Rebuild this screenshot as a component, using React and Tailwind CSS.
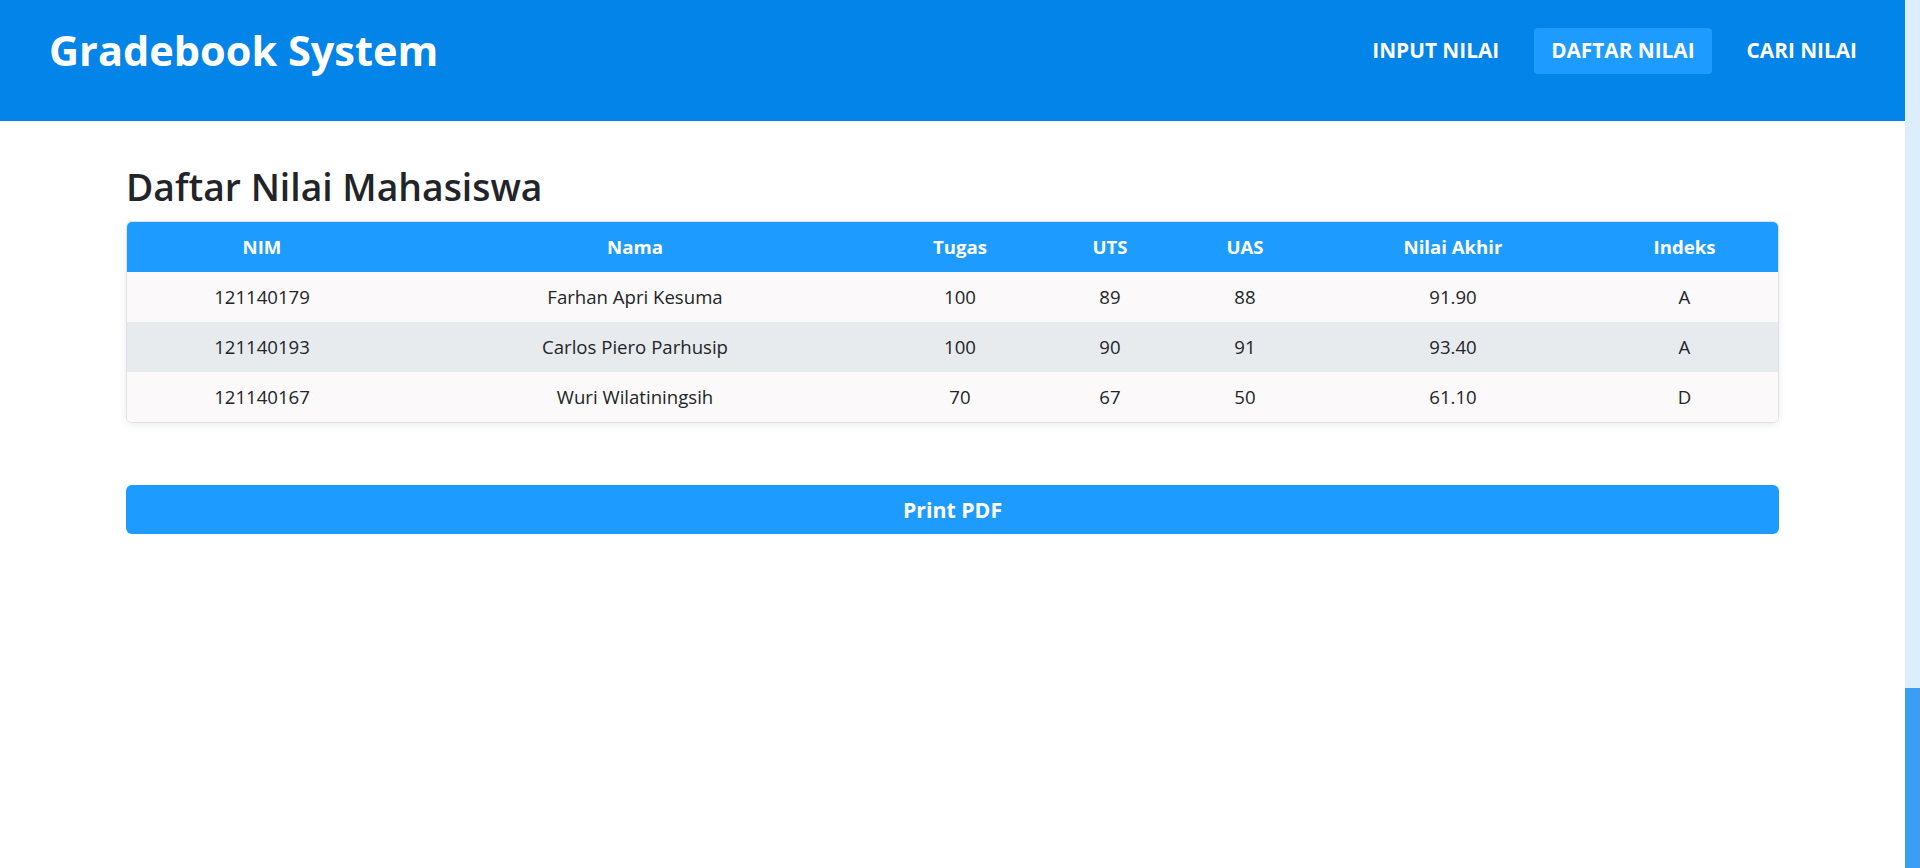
const NAV_ITEMS = [
  { label: 'INPUT NILAI', active: false },
  { label: 'DAFTAR NILAI', active: true },
  { label: 'CARI NILAI', active: false },
];

const COLUMNS = [
  { key: 'nim', label: 'NIM', width: 'w-[270px]' },
  { key: 'nama', label: 'Nama', width: 'w-[476px]' },
  { key: 'tugas', label: 'Tugas', width: 'w-[174px]' },
  { key: 'uts', label: 'UTS', width: 'w-[126px]' },
  { key: 'uas', label: 'UAS', width: 'w-[144px]' },
  { key: 'akhir', label: 'Nilai Akhir', width: 'w-[272px]' },
  { key: 'indeks', label: 'Indeks', width: 'w-[191px]' },
];

const ROWS = [
  { nim: '121140179', nama: 'Farhan Apri Kesuma', tugas: 100, uts: 89, uas: 88, akhir: '91.90', indeks: 'A' },
  { nim: '121140193', nama: 'Carlos Piero Parhusip', tugas: 100, uts: 90, uas: 91, akhir: '93.40', indeks: 'A' },
  { nim: '121140167', nama: 'Wuri Wilatiningsih', tugas: 70, uts: 67, uas: 50, akhir: '61.10', indeks: 'D' },
];

function Navbar() {
  return (
    <header className="h-[121px] bg-[#0284e8] flex items-center justify-between pl-[49px] pr-[31px] pb-[19px]">
      <h1 className="text-[41.5px] font-bold text-white leading-none">Gradebook System</h1>
      <nav className="flex items-center gap-[18px]">
        {NAV_ITEMS.map((item) => (
          <a
            key={item.label}
            href="#"
            className={
              item.active
                ? 'h-[46px] px-[17px] flex items-center rounded-[4px] bg-[#1e9bff] text-white font-bold text-[20.8px]'
                : 'h-[46px] px-[17px] flex items-center rounded-[4px] text-white font-bold text-[20.8px]'
            }
          >
            {item.label}
          </a>
        ))}
      </nav>
    </header>
  );
}

function GradeTable() {
  return (
    <div className="rounded-[6px] border border-[#dee2e6] shadow-[0_2px_8px_rgba(0,0,0,0.08)] overflow-hidden">
      <table className="w-full table-fixed border-collapse">
        <thead>
          <tr className="bg-[#1e9bff] h-[50px]">
            {COLUMNS.map((c) => (
              <th key={c.key} className={`${c.width} text-white font-bold text-[18.6px] text-center`}>
                {c.label}
              </th>
            ))}
          </tr>
        </thead>
        <tbody>
          {ROWS.map((row, i) => (
            <tr key={row.nim} className={i % 2 === 1 ? 'h-[50px] bg-[#e8ebee]' : 'h-[50px] bg-[#fbf9fa]'}>
              {COLUMNS.map((c) => (
                <td key={c.key} className="text-center text-[18.6px] text-[#212529]">
                  {row[c.key]}
                </td>
              ))}
            </tr>
          ))}
        </tbody>
      </table>
    </div>
  );
}

export default function App() {
  return (
    <div className="flex min-h-[868px] bg-white" style={{ fontFamily: '"Open Sans", "Noto Sans", sans-serif' }}>
      <div className="flex-1 min-w-0">
        <Navbar />
        <main className="px-[126px] pt-[42px]">
          <h2 className="text-[37.3px] font-semibold text-[#212529] leading-[48px] mb-[10px]">
            Daftar Nilai Mahasiswa
          </h2>
          <GradeTable />
          <button className="mt-[62px] w-full h-[49px] rounded-[6px] bg-[#1e9bff] text-white font-bold text-[21.3px]">
            Print PDF
          </button>
        </main>
      </div>
      {/* scrollbar */}
      <div className="w-[15px] bg-[#dcedfc] flex flex-col justify-end">
        <div className="h-[180px] bg-[#3a9ff0]" />
      </div>
    </div>
  );
}
